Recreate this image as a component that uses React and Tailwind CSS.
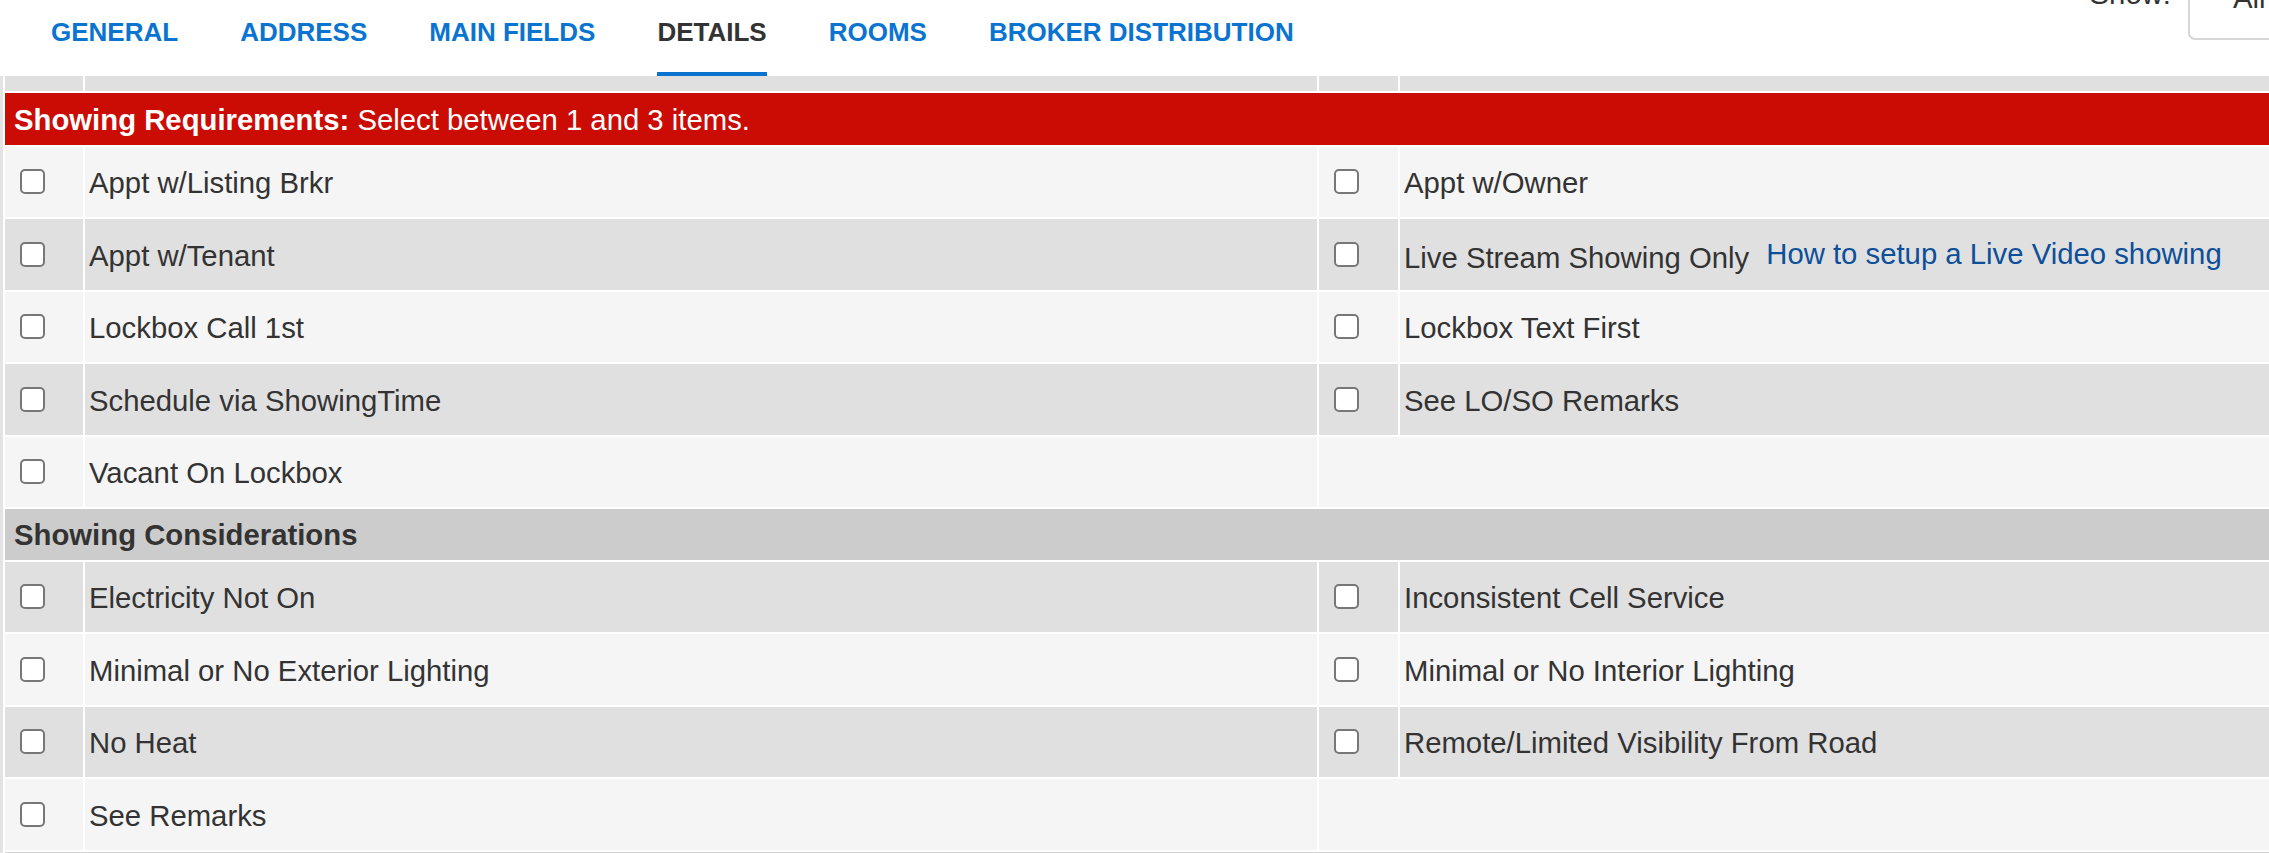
import React from 'react';

const tabs = ['GENERAL', 'ADDRESS', 'MAIN FIELDS', 'DETAILS', 'ROOMS', 'BROKER DISTRIBUTION'];

const requirements = [
    ['Appt w/Listing Brkr', 'Appt w/Owner'],
    ['Appt w/Tenant', 'Live Stream Showing Only'],
    ['Lockbox Call 1st', 'Lockbox Text First'],
    ['Schedule via ShowingTime', 'See LO/SO Remarks'],
    ['Vacant On Lockbox', null],
];

const considerations = [
    ['Electricity Not On', 'Inconsistent Cell Service'],
    ['Minimal or No Exterior Lighting', 'Minimal or No Interior Lighting'],
    ['No Heat', 'Remote/Limited Visibility From Road'],
    ['See Remarks', null],
];

const Box = () => (
    <span className="block w-[25px] h-[25px] rounded-[5px] border-2 border-[#777] bg-white" />
);

const CheckCell = ({ bg }) => (
    <td className={`${bg} pl-[15px] align-middle`}>
        <Box />
    </td>
);

const LabelCell = ({ bg, label }) => (
    <td className={`${bg} pl-[4px] pt-[3px] align-middle text-[#333] whitespace-nowrap`}>
        {label}
        {label === 'Live Stream Showing Only' && (
            <a href="#" className="ml-[17px] text-[#0d4f99] align-[4px]">How to setup a Live Video showing</a>
        )}
    </td>
);

const Row = ({ left, right, dark }) => {
    const bg = dark ? 'bg-[#e0e0e0]' : 'bg-[#f5f5f5]';
    return (
        <tr className="h-[70.5px]">
            <CheckCell bg={bg} />
            <LabelCell bg={bg} label={left} />
            {right ? (
                <>
                    <CheckCell bg={bg} />
                    <LabelCell bg={bg} label={right} />
                </>
            ) : (
                <td colSpan={2} className={bg}></td>
            )}
        </tr>
    );
};

export default function App() {
    return (
        <div className="w-full h-[853px] overflow-hidden bg-white font-['Liberation_Sans',Arial,sans-serif]">
            <div className="w-[2320px] h-full flex flex-col">
                {/* Tabs + show filter */}
                <div className="h-[76px] shrink-0 flex items-start">
                    <nav className="flex gap-[62px] pl-[51px] h-full">
                        {tabs.map((t) => (
                            <div key={t} className="h-full flex flex-col">
                                <span className={`pt-[19px] text-[26px] leading-[26px] font-bold whitespace-nowrap ${t === 'DETAILS' ? 'text-[#333]' : 'text-[#0b74d1]'}`}>
                                    {t}
                                </span>
                                <span className={`mt-auto h-[4px] ${t === 'DETAILS' ? 'bg-[#0b74d1]' : ''}`} />
                            </div>
                        ))}
                    </nav>
                    <div className="ml-auto -mt-[33px] flex items-start gap-[17px] text-[29.3px] leading-[29px] text-[#333]">
                        <span className="mt-[12px]">Show:</span>
                        <div className="w-[132px] h-[73px] border-2 border-[#d6d6d6] rounded-[7px] pl-[43px] pt-[14px]">All</div>
                    </div>
                </div>

                {/* Details table */}
                <div className="flex-1 overflow-hidden border-l-[3px] border-[#e3e3e3]">
                    <table className="-mt-[2px] w-[2317px] table-fixed border-separate border-spacing-[2px] text-[29.3px]">
                        <colgroup>
                            <col className="w-[78px]" />
                            <col className="w-[1232px]" />
                            <col className="w-[79px]" />
                            <col className="w-[918px]" />
                        </colgroup>
                        <tbody>
                            <tr className="h-[15px]">
                                <td className="bg-[#e0e0e0]"></td>
                                <td className="bg-[#e0e0e0]"></td>
                                <td className="bg-[#e0e0e0]"></td>
                                <td className="bg-[#e0e0e0]"></td>
                            </tr>
                            <tr className="h-[51.5px]">
                                <td colSpan={4} className="bg-[#cb0c04] text-white pl-[9px] pt-[2px] align-middle whitespace-nowrap">
                                    <b className="font-bold">Showing Requirements:</b> Select between 1 and 3 items.
                                </td>
                            </tr>
                            {requirements.map(([l, r], i) => (
                                <Row key={l} left={l} right={r} dark={i % 2 === 1} />
                            ))}
                            <tr className="h-[50.5px]">
                                <td colSpan={4} className="bg-[#cccccc] text-[#333] font-bold pl-[9px] pt-[2px] align-middle">
                                    Showing Considerations
                                </td>
                            </tr>
                            {considerations.map(([l, r], i) => (
                                <Row key={l} left={l} right={r} dark={i % 2 === 0} />
                            ))}
                            <tr className="h-[50px]">
                                <td colSpan={4} className="bg-[#d0d0d0]"></td>
                            </tr>
                        </tbody>
                    </table>
                </div>
            </div>
        </div>
    );
}
